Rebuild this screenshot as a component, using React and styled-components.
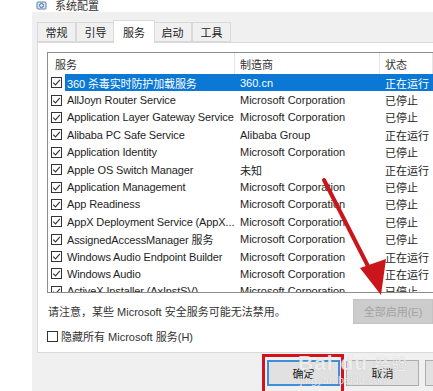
import React from "react";
import styled, { createGlobalStyle } from "styled-components";

const GlobalStyle = createGlobalStyle`
  html, body {
    margin: 0;
    padding: 0;
    background: #ffffff;
  }
  body {
    font-family: "Liberation Sans", "Noto Sans CJK SC", sans-serif;
    font-size: 11px;
    color: #1a1a1a;
  }
`;

const services = [
  { name: "360 杀毒实时防护加载服务", maker: "360.cn", state: "正在运行", selected: true },
  { name: "AllJoyn Router Service", maker: "Microsoft Corporation", state: "已停止" },
  { name: "Application Layer Gateway Service", maker: "Microsoft Corporation", state: "已停止" },
  { name: "Alibaba PC Safe Service", maker: "Alibaba Group", state: "正在运行" },
  { name: "Application Identity", maker: "Microsoft Corporation", state: "已停止" },
  { name: "Apple OS Switch Manager", maker: "未知", state: "正在运行" },
  { name: "Application Management", maker: "Microsoft Corporation", state: "已停止" },
  { name: "App Readiness", maker: "Microsoft Corporation", state: "已停止" },
  { name: "AppX Deployment Service (AppX...", maker: "Microsoft Corporation", state: "已停止" },
  { name: "AssignedAccessManager 服务", maker: "Microsoft Corporation", state: "已停止" },
  { name: "Windows Audio Endpoint Builder", maker: "Microsoft Corporation", state: "正在运行" },
  { name: "Windows Audio", maker: "Microsoft Corporation", state: "正在运行" },
  { name: "ActiveX Installer (AxInstSV)", maker: "Microsoft Corporation", state: "已停止" },
];

const tabs = ["常规", "引导", "服务", "启动", "工具"];

const Window = styled.div`
  position: relative;
  width: 433px;
  height: 391px;
  overflow: hidden;
  background: #ffffff;
`;

const TitleBar = styled.div`
  height: 12px;
  display: flex;
  align-items: center;
  gap: 7px;
  padding-left: 36px;
  font-size: 11px;
  color: #333;
  line-height: 12px;
`;

const Body = styled.div`
  margin-left: 32px;
  height: 379px;
  background: #f0f0f0;
  padding: 9px 0 0 5px;
  box-sizing: border-box;
  display: flex;
  flex-direction: column;
`;

const TabRow = styled.div`
  display: flex;
  align-items: flex-end;
  height: 21px;
  position: relative;
  z-index: 1;
`;

const Tab = styled.div`
  width: ${(p) => (p.$active ? 42 : 39)}px;
  height: ${(p) => (p.$active ? 23 : 20)}px;
  margin: ${(p) => (p.$active ? "0 -2px -1px" : "0")};
  box-sizing: border-box;
  border: 1px solid #d9d9d9;
  border-bottom: ${(p) => (p.$active ? "none" : "1px solid #d9d9d9")};
  background: ${(p) => (p.$active ? "#ffffff" : "#f0f0f0")};
  display: flex;
  align-items: center;
  justify-content: center;
  color: #222;
  position: relative;
  z-index: ${(p) => (p.$active ? 2 : 1)};
`;

const Panel = styled.div`
  background: #ffffff;
  border: 1px solid #d9d9d9;
  border-right: none;
  height: 311px;
  box-sizing: border-box;
  padding: 9px 0 0 9px;
  display: flex;
  flex-direction: column;
`;

const ListBox = styled.div`
  border: 1px solid #8c8c8c;
  border-right: none;
  height: 241px;
  overflow: hidden;
  box-sizing: border-box;
`;

const Columns = styled.div`
  display: grid;
  grid-template-columns: 187px 145px 1fr;
  align-items: center;
  height: ${(p) => (p.$header ? "21px" : "17.4px")};
`;

const HeadCell = styled.div`
  height: 100%;
  display: flex;
  align-items: center;
  padding-left: ${(p) => p.$pad || 6}px;
  border-right: 1px solid #e5e5e5;
  color: #333;
`;

const Cell = styled.div`
  height: 100%;
  display: flex;
  align-items: center;
  padding-left: ${(p) => p.$pad || 0}px;
  white-space: nowrap;
  overflow: hidden;
  background: ${(p) => (p.$selected ? "#0a78d4" : "transparent")};
  color: ${(p) => (p.$selected ? "#ffffff" : "#1e1e1e")};
`;

const NameCell = styled.div`
  height: 100%;
  display: flex;
  align-items: center;
  padding-left: 3px;
  gap: 3px;
  white-space: nowrap;
  overflow: hidden;
`;

const NameText = styled.span`
  height: 100%;
  display: flex;
  align-items: center;
  flex: 1;
  padding-left: 2px;
  letter-spacing: -0.12px;
  background: ${(p) => (p.$selected ? "#0a78d4" : "transparent")};
  color: ${(p) => (p.$selected ? "#ffffff" : "#1e1e1e")};
`;

const Box = styled.span`
  width: 11px;
  height: 11px;
  flex: none;
  box-sizing: border-box;
  border: 1px solid #333;
  background: #fff;
  display: inline-flex;
  align-items: center;
  justify-content: center;
`;

const NoteRow = styled.div`
  display: flex;
  justify-content: space-between;
  align-items: center;
  margin-top: 5px;
  height: 26px;
`;

const Note = styled.span`
  color: #333;
  padding-left: 1px;
`;

const Button = styled.div`
  width: ${(p) => p.$w || 73}px;
  height: ${(p) => p.$h || 26}px;
  box-sizing: border-box;
  display: flex;
  align-items: center;
  justify-content: center;
  flex: none;
  background: ${(p) => (p.$disabled ? "#cccccc" : "#e1e1e1")};
  color: ${(p) => (p.$disabled ? "#a3a3a3" : "#1e1e1e")};
  border: ${(p) => (p.$default ? "2px solid #3f8fd8" : p.$disabled ? "1px solid #c4c4c4" : "1px solid #adadad")};
`;

const HideRow = styled.label`
  display: flex;
  align-items: center;
  gap: 3px;
  margin-top: 4px;
  color: #333;
`;

const Footer = styled.div`
  display: flex;
  gap: 6px;
  padding: 7px 0 0 230px;
  position: relative;
`;

const Highlight = styled.div`
  position: absolute;
  left: 225px;
  top: 1px;
  width: 82px;
  height: 40px;
  box-sizing: border-box;
  border: 3px solid #d3121d;
`;

const Watermark = styled.div`
  position: absolute;
  left: 298px;
  top: 340px;
  color: rgba(255, 255, 255, 0.75);
  text-shadow: 0 0 1px rgba(130, 130, 130, 0.45);
  pointer-events: none;
  font-family: "Liberation Sans", sans-serif;
`;

const MarkBig = styled.div`
  font-size: 21px;
  font-weight: bold;
  letter-spacing: 1px;
  padding-top: 12px;
  line-height: 22px;
  span {
    font-family: "Noto Sans CJK SC", sans-serif;
    font-size: 16px;
    font-weight: normal;
    margin-left: 6px;
  }
`;

const MarkSmall = styled.div`
  font-size: 11px;
  line-height: 12px;
  padding-left: 2px;
`;

const Overlay = styled.svg`
  position: absolute;
  left: 0;
  top: 0;
  pointer-events: none;
`;

const Check = () => (
  <Box>
    <svg width="9" height="9" viewBox="0 0 9 9">
      <path d="M1.2 4.6 L3.5 6.9 L7.9 1.8" fill="none" stroke="#333" strokeWidth="1.1" />
    </svg>
  </Box>
);

const AppIcon = () => (
  <svg width="12" height="10" viewBox="0 0 12 10">
    <rect x="1" y="1" width="9" height="7" rx="1" fill="#dbe6f3" stroke="#5b7fb0" strokeWidth="1" />
    <circle cx="5.5" cy="4.5" r="2" fill="none" stroke="#4a6fa5" strokeWidth="1" />
  </svg>
);

export default function App() {
  return (
    <>
      <GlobalStyle />
      <Window>
        <TitleBar>
          <AppIcon />
          <span>系统配置</span>
        </TitleBar>
        <Body>
          <TabRow>
            {tabs.map((t) => (
              <Tab key={t} $active={t === "服务"}>
                {t}
              </Tab>
            ))}
          </TabRow>
          <Panel>
            <ListBox>
              <Columns $header>
                <HeadCell $pad={7}>服务</HeadCell>
                <HeadCell $pad={5}>制造商</HeadCell>
                <HeadCell $pad={5}>状态</HeadCell>
              </Columns>
              {services.map((s) => (
                <Columns key={s.name}>
                  <NameCell>
                    <Check />
                    <NameText $selected={s.selected}>{s.name}</NameText>
                  </NameCell>
                  <Cell $pad={5} $selected={s.selected}>
                    {s.maker}
                  </Cell>
                  <Cell $pad={5} $selected={s.selected}>
                    {s.state}
                  </Cell>
                </Columns>
              ))}
            </ListBox>
            <NoteRow>
              <Note>请注意，某些 Microsoft 安全服务可能无法禁用。</Note>
              <Button $w={80} $h={25} $disabled>
                全部启用(E)
              </Button>
            </NoteRow>
            <HideRow>
              <Box />
              <span>隐藏所有 Microsoft 服务(H)</span>
            </HideRow>
          </Panel>
          <Footer>
            <Button $default>确定</Button>
            <Button>取消</Button>
            <Button>应用(A)</Button>
            <Highlight />
          </Footer>
        </Body>
        <Watermark>
          <MarkBig>
            Bai du<span>经验</span>
          </MarkBig>
          <MarkSmall>jingyan.baidu.com</MarkSmall>
        </Watermark>
        <Overlay width="433" height="391" viewBox="0 0 433 391">
          <line x1="324" y1="180" x2="371" y2="272" stroke="#c9151b" strokeWidth="4" strokeLinecap="round" />
          <polygon points="360,268 386,259 381,295" fill="#c9151b" />
        </Overlay>
      </Window>
    </>
  );
}
